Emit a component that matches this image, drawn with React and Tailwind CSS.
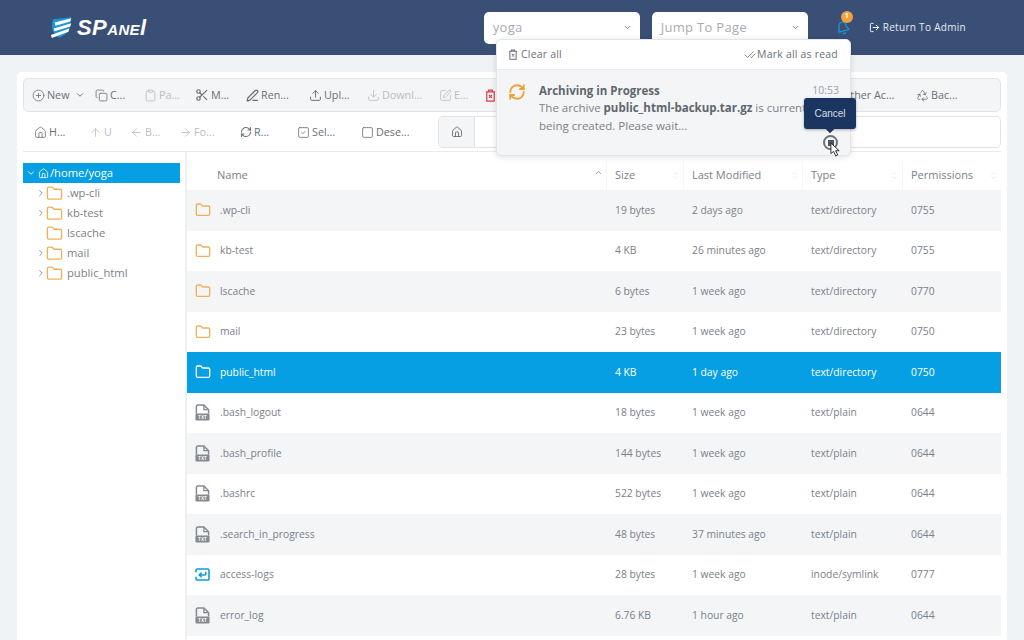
import React from "react";
import {
  House, CirclePlus, ChevronDown, ChevronRight, ChevronUp, Copy, Clipboard, Scissors, PenLine, Upload, Download,
  SquarePen, ArrowUp, ArrowLeft, ArrowRight, RefreshCw, SquareCheck, Square, Folder, Bell, LogOut, CheckCheck, Ellipsis, ChevronsUpDown, Recycle,
} from "lucide-react";

const Trash = ({ className }) => (
  <svg viewBox="0 0 12 14" className={className} fill="none" stroke="currentColor" strokeWidth="1.3">
    <path d="M1 3h10M4 3V1.2h4V3M2 3v10h8V3z" />
    <path d="M4.5 6.5l3 3M7.5 6.5l-3 3" />
  </svg>
);

const TxtFile = () => (
  <svg viewBox="0 0 16 18" className="w-[15px] h-[17px] shrink-0 text-[#85898d]" fill="none">
    <path d="M1.5 10V2.5a1.5 1.5 0 0 1 1.5-1.5h6.5l5 5v4" stroke="currentColor" strokeWidth="1.6" />
    <path d="M9.5 1v5h5" stroke="currentColor" strokeWidth="1.4" />
    <rect x="0.5" y="10" width="15" height="7.5" rx="1.4" fill="currentColor" />
    <text x="8" y="16" textAnchor="middle" fontSize="5" fontWeight="700" fill="#fff" fontFamily="Liberation Sans, sans-serif">TXT</text>
  </svg>
);

const LinkIcon = () => (
  <svg viewBox="0 0 16 14" className="w-[15px] h-[13px] shrink-0 text-[#0b9fd8]" fill="none" stroke="currentColor" strokeWidth="1.7">
    <path d="M1 4.500V2.500A1.500 1.500 0 0 1 2.500 1h11A1.500 1.500 0 0 1 15 2.500v9a1.500 1.500 0 0 1-1.500 1.500h-11A1.500 1.500 0 0 1 1 11.500V9.500" />
    <path d="M11.500 4v2.500a1 1 0 0 1-1 1H4.500M7 5L4.500 7.500L7 10" />
  </svg>
);

const Logo = () => (
  <div className="flex items-center gap-[3px]">
    <svg viewBox="0 0 26 24" className="w-[24px] h-[23px]">
      <path d="M3 3 L23 1 L21 14 Q18 20 10 23 Q3 19 2 12 Z" fill="#1c95d4" />
      <path d="M5 6.500 L23 2 L22 5.500 L6 10 Z M4 13 L23 7.500 L22 11 L5 16 Z M1 20 L21 13 L20 16.500 L2 23.500 Z" fill="#fff" />
    </svg>
    <span className="text-[22px] leading-none font-bold italic text-white tracking-[0.4px] [font-family:'Liberation_Sans',sans-serif]">
      SP<span className="[font-variant-caps:small-caps]">ane</span>l
    </span>
  </div>
);

const Tool = ({ w, icon: I, label, dim, red, sw = 1.5, size = "w-[13px] h-[13px]" }) => (
  <div className={`flex items-center gap-[2px] shrink-0 ${w} ${dim ? "text-[#b9bdc2]" : "text-[#6a7077]"}`}>
    {I && <I className={`${size} shrink-0 ${red ? "text-[#dc3d4b]" : ""}`} strokeWidth={sw} />}
    <span className="text-[10.750px]">{label}</span>
  </div>
);

const rows = [
  [".wp-cli", "19 bytes", "2 days ago", "text/directory", "0755", "d"],
  ["kb-test", "4 KB", "26 minutes ago", "text/directory", "0755", "d"],
  ["lscache", "6 bytes", "1 week ago", "text/directory", "0770", "d"],
  ["mail", "23 bytes", "1 week ago", "text/directory", "0750", "d"],
  ["public_html", "4 KB", "1 day ago", "text/directory", "0750", "d"],
  [".bash_logout", "18 bytes", "1 week ago", "text/plain", "0644", "f"],
  [".bash_profile", "144 bytes", "1 week ago", "text/plain", "0644", "f"],
  [".bashrc", "522 bytes", "1 week ago", "text/plain", "0644", "f"],
  [".search_in_progress", "48 bytes", "37 minutes ago", "text/plain", "0644", "f"],
  ["access-logs", "28 bytes", "1 week ago", "inode/symlink", "0777", "l"],
  ["error_log", "6.76 KB", "1 hour ago", "text/plain", "0644", "f"],
  ["", "", "", "", "", ""],
];

const cols = "grid grid-cols-[420px_77px_119px_100px_98px]";

const Head = ({ label, pl, sorted }) => (
  <div className={`flex items-center justify-between pr-[3px] ${pl} text-[11px] text-[#7b8188] border-r border-[#f5f6f8] last:border-r-0`}>
    <span>{label}</span>
    {sorted
      ? <ChevronUp className="w-[9px] h-[9px] text-[#8a9096] -mt-[6px]" strokeWidth={2.4} />
      : <ChevronsUpDown className="w-[9px] h-[9px] text-[#e0e3e6]" />}
  </div>
);

const Row = ({ r, i }) => {
  const active = i === 4;
  const bg = active ? "bg-[#069fe3] text-white" : i % 2 === 0 ? "bg-[#f3f5f7] text-[#7b8188]" : "bg-white text-[#7b8188]";
  return (
    <div className={`${cols} h-[40.500px] items-center text-[10.300px] shrink-0 ${bg}`}>
      <div className="flex items-center pl-[8px]">
        <div className="w-[25px]">
          {r[5] === "d" && <Folder className={`w-[16px] h-[16px] ${active ? "text-white" : "text-[#efb05a]"}`} strokeWidth={2} />}
          {r[5] === "f" && <TxtFile />}
          {r[5] === "l" && <LinkIcon />}
        </div>
        <span>{r[0]}</span>
      </div>
      <div className="pl-[8px]">{r[1]}</div>
      <div className="pl-[8px]">{r[2]}</div>
      <div className="pl-[8px]">{r[3]}</div>
      <div className="pl-[8px]">{r[4]}</div>
    </div>
  );
};

const TreeItem = ({ name, arrow = true }) => (
  <div className="h-[20px] flex items-center pl-[13px] text-[11.200px] text-[#7b8188]">
    <div className="w-[10px]">{arrow && <ChevronRight className="w-[10px] h-[10px] text-[#7b8188]" strokeWidth={2} />}</div>
    <Folder className="w-[17px] h-[17px] text-[#efb05a] mr-[4px]" strokeWidth={1.9} />
    <span>{name}</span>
  </div>
);

const SelectBox = ({ label, w }) => (
  <div className={`${w} h-[32px] bg-white rounded-[5px] flex items-center justify-between pl-[9px] pr-[8px] text-[13px] text-[#a7adb3] tracking-[0.3px]`}>
    <span>{label}</span>
    <ChevronDown className="w-[9px] h-[9px] text-[#777]" strokeWidth={2.5} />
  </div>
);

export default function App() {
  return (
    <div className="relative w-[1024px] h-[640px] overflow-hidden bg-[#f0f3f5] [font-family:'Open_Sans',sans-serif]">
      <header className="h-[55px] bg-[#3a4f76] flex items-center pl-[50px]">
        <Logo />
        <div className="ml-auto flex items-center">
          <SelectBox label="yoga" w="w-[156px]" />
          <div className="w-[12px]" />
          <SelectBox label="Jump To Page" w="w-[156px]" />
          <div className="relative ml-[28px] w-[14px] h-[16px]">
            <Bell className="w-[14px] h-[16px] text-[#1f93d2] -rotate-[15deg]" strokeWidth={2.3} />
            <span className="absolute -top-[9px] left-[5px] w-[12px] h-[12px] rounded-full bg-[#f0a23c] text-white text-[7px] flex items-center justify-center font-bold">1</span>
          </div>
          <div className="ml-[19px] mr-[58px] flex items-center gap-[3px] text-white">
            <LogOut className="w-[11px] h-[11px]" strokeWidth={2} />
            <span className="text-[10px] font-medium tracking-[0.3px] text-[#e7ebf1]">Return To Admin</span>
          </div>
        </div>
      </header>

      <main className="mx-[17px] mt-[17px] h-[568px] bg-white rounded-t-[5px] px-[6px] pt-[6px]">
        <div className="h-[34px] bg-[#f3f5f7] border border-[#e1e4e7] rounded-[5px] flex items-center pl-[8px]">
          <Tool w="w-[63px]" icon={CirclePlus} label={<span className="flex items-center gap-[6px]">New <ChevronDown className="w-[10px] h-[10px]" strokeWidth={2.2} /></span>} />
          <Tool w="w-[49px]" icon={Copy} label="C..." />
          <Tool w="w-[51px]" icon={Clipboard} label="Pa..." dim />
          <Tool w="w-[51px]" icon={Scissors} label="M..." sw={2} size="w-[14px] h-[14px]" />
          <Tool w="w-[63px]" icon={PenLine} label="Ren..." sw={2.2} />
          <Tool w="w-[58px]" icon={Upload} label="Upl..." sw={1.8} />
          <Tool w="w-[72px]" icon={Download} label="Downl..." dim />
          <Tool w="w-[45px]" icon={SquarePen} label="E..." dim />
          <Tool w="w-[343px]" icon={Trash} label="" red />
          <Tool w="w-[89px]" icon={Ellipsis} label="Other Ac..." />
          <Tool w="w-[50px]" icon={Recycle} label="Bac..." />
        </div>

        <div className="mt-[4px] h-[32px] flex items-center pl-[11px]">
          <Tool w="w-[55px]" icon={House} label="H..." />
          <Tool w="w-[41px]" icon={ArrowUp} label="U" dim />
          <Tool w="w-[49px]" icon={ArrowLeft} label="B..." dim />
          <Tool w="w-[61px]" icon={ArrowRight} label="Fo..." dim />
          <Tool w="w-[57px]" icon={RefreshCw} label="R..." sw={2.2} size="w-[12px] h-[12px]" />
          <Tool w="w-[64px]" icon={SquareCheck} label="Sel..." />
          <Tool w="w-[77px]" icon={Square} label="Dese..." />
          <div className="flex-1 h-[32px] border border-[#e1e4e7] rounded-[5px] flex overflow-hidden">
            <div className="w-[36px] bg-[#f3f5f7] border-r border-[#e1e4e7] flex items-center justify-center text-[#5f666d]">
              <House className="w-[12px] h-[12px]" strokeWidth={1.7} />
            </div>
          </div>
        </div>

        <div className="mt-[3px] border-t border-[#e9ebee] flex">
          <aside className="w-[164px] shrink-0 border-r-2 border-[#eef0f2] pt-[11px] h-[490px]">
            <div className="w-[157px] h-[20px] bg-[#069fe3] flex items-center pl-[3px] text-white text-[11.200px]">
              <ChevronDown className="w-[10px] h-[10px] mr-[2px]" strokeWidth={2.2} />
              <House className="w-[11px] h-[11px] mr-[1px]" strokeWidth={1.8} />
              <span>/home/yoga</span>
            </div>
            <TreeItem name=".wp-cli" />
            <TreeItem name="kb-test" />
            <TreeItem name="lscache" arrow={false} />
            <TreeItem name="mail" />
            <TreeItem name="public_html" />
          </aside>
          <section className="flex-1 pt-[9px] flex flex-col">
            <div className={`${cols} h-[29px] shrink-0`}>
              <Head label="Name" pl="pl-[30px]" sorted />
              <Head label="Size" pl="pl-[8px]" />
              <Head label="Last Modified" pl="pl-[8px]" />
              <Head label="Type" pl="pl-[8px]" />
              <Head label="Permissions" pl="pl-[8px]" />
            </div>
            {rows.map((r, i) => <Row key={i} r={r} i={i} />)}
          </section>
        </div>
      </main>

      <div className="absolute left-[496px] top-[39px] w-[355px] h-[117px] rounded-[5px] border border-[#e3e6e9] bg-[#f3f5f7] shadow-[0_1px_6px_rgba(0,0,0,0.12)] flex flex-col">
        <div className="h-[30px] shrink-0 bg-white rounded-t-[5px] border-b border-[#e8eaed] flex items-center justify-between pl-[11px] pr-[12px] text-[10.500px] font-medium tracking-[0.2px] text-[#6b7178]">
          <span className="flex items-center gap-[3px]"><Trash className="w-[10px] h-[11px]" />Clear all</span>
          <span className="flex items-center gap-[1px]"><CheckCheck className="w-[12px] h-[12px]" strokeWidth={1.6} />Mark all as read</span>
        </div>
        <div className="flex pl-[11px] pr-[11px] pt-[12px]">
          <RefreshCw className="w-[18px] h-[18px] text-[#eea13a] mr-[13px] mt-px shrink-0" strokeWidth={2.4} />
          <div className="flex-1 text-[11.500px] text-[#7b8188]">
            <div className="flex justify-between h-[17px] leading-[17px]">
              <span className="font-bold text-[#5f666d]">Archiving in Progress</span>
              <span className="text-[10.500px] text-[#9aa0a6]">10:53</span>
            </div>
            <div className="whitespace-nowrap h-[18px] leading-[18px]">The archive <b className="text-[#5f666d]">public_html-backup.tar.gz</b> is currently</div>
            <div className="leading-[18px]">being created. Please wait...</div>
          </div>
        </div>
      </div>

      <div className="absolute left-[804px] top-[98px] w-[52px] h-[31px] rounded-[3px] bg-[#1b3561] text-[#d5deea] text-[10px] flex items-center justify-center shadow-[0_1px_3px_rgba(0,0,0,0.3)] [font-family:'Liberation_Sans',sans-serif]">
        Cancel
        <span className="absolute -bottom-[3px] left-[23px] w-[6px] h-[6px] bg-[#1b3561] rotate-45" />
      </div>
      <div className="absolute left-[823px] top-[135px] w-[15px] h-[15px] rounded-full border-2 border-[#6d737a] flex items-center justify-center">
        <span className="w-[6px] h-[6px] bg-[#4e5560]" />
      </div>
      <svg viewBox="0 0 12 16" className="absolute left-[830px] top-[142px] w-[11px] h-[15px]">
        <path d="M1 1 V12.500 L4 10 L6.200 15 L8.400 14 L6.200 9.300 H10 Z" fill="#fff" stroke="#222" strokeWidth="1" />
      </svg>
    </div>
  );
}
